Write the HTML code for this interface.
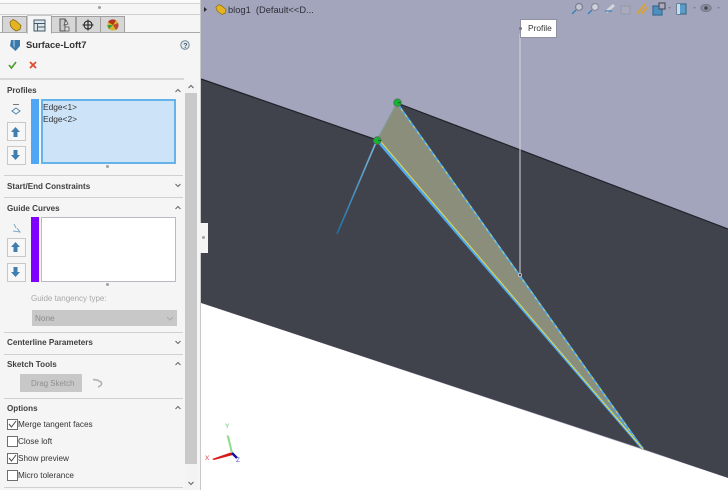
<!DOCTYPE html>
<html><head><meta charset="utf-8">
<style>
html,body{margin:0;padding:0;width:728px;height:490px;overflow:hidden;background:#fff;font-family:"Liberation Sans",sans-serif}
#w{position:absolute;left:0;top:0;width:728px;height:490px;overflow:hidden;filter:blur(.3px)}
.a{position:absolute}
#p{left:0;top:0;width:200px;height:490px;background:#f5f5f5;overflow:hidden}
.t{position:absolute;font-size:8.2px;color:#333;white-space:nowrap;line-height:11px}
.h{position:absolute;left:7px;font-size:8.1px;font-weight:bold;color:#404040;white-space:nowrap;line-height:11px}
.l{position:absolute;left:4px;width:179px;height:1px;background:#d0d0d0}
.btn{position:absolute;left:7px;width:17px;height:17px;border:1px solid #c8c8c8;background:#f7f7f7}
.cb{position:absolute;left:7px;width:9px;height:9px;border:1px solid #6e6e6e;background:#fff}
.tab{position:absolute;top:16px;height:16px;background:#d6d6d6;border:1px solid #a0a0a0;border-bottom:none;width:23px}
.dot{position:absolute;width:3px;height:3px;border-radius:50%;background:#a0a0a0}
svg{position:absolute;overflow:visible}
</style></head><body><div id="w">
<svg class="a" style="left:0;top:0" width="728" height="490" viewBox="0 0 728 490">
<defs><linearGradient id="g1" x1="377" y1="140" x2="337" y2="234" gradientUnits="userSpaceOnUse"><stop offset="0" stop-color="#7fb9dc"/><stop offset="1" stop-color="#1f6f9f"/></linearGradient></defs>
<rect x="200" y="0" width="528" height="490" fill="#a2a5bb"/>
<polygon points="201,79 377,140 397,103 728,229 728,478 643,449 201,303" fill="#40424c"/>
<polyline points="201,79 377,140" stroke="#20212a" stroke-width="1.2" fill="none"/>
<polyline points="397,103 728,229" stroke="#20212a" stroke-width="1.2" fill="none"/>
<polygon points="201,303 728,478 728,490 201,490" fill="#fff"/>
<polygon points="397,103 377,140 643,449" fill="#8c8e7c"/>
<line x1="397" y1="103" x2="377" y2="140" stroke="#7f9a94" stroke-width="1.2"/>
<line x1="377" y1="140" x2="337" y2="234" stroke="url(#g1)" stroke-width="1.6"/>
<line x1="397" y1="103" x2="643" y2="449" stroke="#4fa9ec" stroke-width="1.8"/>
<line x1="397" y1="103" x2="643" y2="449" stroke="#d3cc55" stroke-width="1" stroke-dasharray="3 4"/>
<line x1="377" y1="140" x2="643" y2="449" stroke="#4fa9ec" stroke-width="2.8"/>
<line x1="378.500" y1="139" x2="643" y2="449" stroke="#e0d44e" stroke-width="1.1"/>
<line x1="520" y1="34" x2="520" y2="275" stroke="#d8d8d8" stroke-width="1"/>
<circle cx="520" cy="275" r="1.6" fill="#40424c" stroke="#d0d0d0" stroke-width=".8"/>
<circle cx="397.500" cy="102.700" r="3.8" fill="#12b52f" stroke="#5b6a60" stroke-width=".8"/>
<circle cx="377.300" cy="140.500" r="3.8" fill="#12b52f" stroke="#5b6a60" stroke-width=".8"/>
<line x1="398" y1="102.700" x2="401" y2="102.700" stroke="#174d20" stroke-width=".8"/>
<line x1="378" y1="140.500" x2="381" y2="140.500" stroke="#174d20" stroke-width=".8"/>
<!-- triad -->
<polygon points="232,452 233,455 214,460 212,459" fill="#d51a1a"/>
<polygon points="231,453 233,453 229,436 226.500,435" fill="#8fdc8f"/>
<line x1="232" y1="453" x2="237" y2="458" stroke="#10109a" stroke-width="2.4"/>
<text x="205" y="460" font-size="6.500" fill="#e04040" font-family="Liberation Sans">X</text>
<text x="225" y="428" font-size="6.500" fill="#58c858" font-family="Liberation Sans">Y</text>
<text x="236" y="462" font-size="6.500" fill="#5050d8" font-family="Liberation Sans">Z</text>
<!-- top-left tree -->
<polygon points="204,7 204,12 207,9.500" fill="#2a2a2a"/>
<path d="M216 7 L219 4.500 L222 6 L226 9.500 L225.500 13 L222 14.500 L219 12.500 L216.500 10 Z" fill="#e3b324" stroke="#8a6a10" stroke-width=".7"/>
<!-- heads up toolbar -->
<g fill="none" stroke-width="1.300">
<circle cx="579" cy="7" r="3.500" stroke="#7d8095" fill="#c4c6d2"/><line x1="576" y1="10" x2="572" y2="14" stroke="#3b7fb6"/>
<circle cx="595" cy="7" r="3.500" stroke="#8a8da0" fill="#cfd0da"/><line x1="592" y1="10" x2="588" y2="14" stroke="#3b7fb6"/>
<line x1="606" y1="12" x2="614" y2="5" stroke="#d5d6dd" stroke-width="3"/><line x1="605" y1="11" x2="612" y2="11" stroke="#3b7fb6"/>
<rect x="621" y="6" width="9" height="8" stroke="#9a9cad" fill="#a9abbd"/>
<path d="M637 14 L645 4 M641 14 L648 7" stroke="#d7a23a" stroke-width="2"/>
<rect x="653" y="6" width="9" height="9" fill="#4d8fc0" stroke="#3d6f96"/><rect x="659" y="3" width="6" height="6" fill="#a9abbd" stroke="#55576a"/>
<rect x="677" y="4" width="9" height="10" fill="#5a9cc8" stroke="#4b6f8a"/><rect x="677" y="4" width="3" height="10" fill="#c9dbe6"/>
<ellipse cx="706" cy="8" rx="5" ry="3.500" fill="#8d8f9e" stroke="#7b7d8c"/><circle cx="706" cy="8" r="1.800" fill="#44465a"/>
</g>
<g fill="#7f8297"><polygon points="668,7 671,7 669.500,9"/><polygon points="693,7 696,7 694.500,9"/><polygon points="717,7 720,7 718.500,9"/></g>
</svg>
<div class="t" style="left:228px;top:5px;font-size:9.300px;color:#2e2e38">blog1&nbsp; (Default&lt;&lt;D...</div>
<div class="a" style="left:520px;top:19px;width:37px;height:19px;background:#fff;border:1px solid #8f90a0;box-sizing:border-box"></div>
<div class="t" style="left:528px;top:23px;font-size:8.400px;color:#333">Profile</div>
<div class="a" style="left:519px;top:27px;width:3px;height:3px;border-radius:50%;background:#777"></div>

<div class="a" id="p">
 <div class="a" style="left:0;top:0;width:200px;height:3px;background:#fafafa;border-bottom:1px solid #d4d4d4"></div>
 <div class="dot" style="left:98px;top:6px"></div>
 <div class="a" style="left:0;top:14px;width:200px;height:1px;background:#d0d0d0"></div>
 <div class="tab" style="left:2px"></div>
 <div class="tab" style="left:27px;top:15px;height:18px;background:#f5f5f5;border-color:#c8c8c8"></div>
 <div class="tab" style="left:51px"></div>
 <div class="tab" style="left:76px"></div>
 <div class="tab" style="left:100px"></div>
 <div class="a" style="left:0;top:32px;width:27px;height:1px;background:#aaa"></div>
 <div class="a" style="left:51px;top:32px;width:149px;height:1px;background:#aaa"></div>
 <svg style="left:0;top:0" width="200" height="490">
  <path d="M10 22 L13 19.500 L16 21 L21 25.500 L20 29.500 L16 31 L13 29 L10.500 26 Z" fill="#e3b324" stroke="#8a6a10" stroke-width=".8"/>
  <rect x="34" y="20" width="11" height="11" fill="#dfe6ec" stroke="#3f5666"/><path d="M34 23.500H45M37.500 23.500V31M37.500 27H45" stroke="#3f5666" stroke-width=".9"/>
  <path d="M60 19H65V31H60Z" fill="#c9c9c9" stroke="#555"/><path d="M66 20L68 24L64 25ZM65 27H69V31H65Z" fill="#e0e0e0" stroke="#555" stroke-width=".8"/>
  <circle cx="88" cy="25" r="4" fill="none" stroke="#222" stroke-width="1.100"/><path d="M88 19.500V30.500M82.500 25H93.500" stroke="#222" stroke-width="1.100"/>
  <circle cx="113" cy="25" r="5.500" fill="#d8b530"/><path d="M113 25L108 22A5.500 5.500 0 0 1 116 20.500Z" fill="#b6331f"/><path d="M113 25L118 23A5.500 5.500 0 0 1 116 30Z" fill="#c04a30"/><path d="M113 25L109 29A5.500 5.500 0 0 1 107.500 25Z" fill="#3a9c3a"/>
  <path d="M11 40H20V46L15.500 51L10 46Z" fill="#3b79a8"/><path d="M13 40H15V48L13 46Z" fill="#79a9cc"/>
  <circle cx="185" cy="45" r="4.200" fill="#e4ecf0" stroke="#6b8494" stroke-width="1"/><text x="183.200" y="47.800" font-size="7" font-weight="bold" fill="#456" font-family="Liberation Sans">?</text>
  <path d="M9 65L11.500 68L16 62" fill="none" stroke="#4ba02f" stroke-width="1.700"/>
  <path d="M30 62L36 68M36 62L30 68" stroke="#e2462d" stroke-width="1.700"/>
  <!-- chevrons -->
  <g fill="none" stroke="#6a6a6a" stroke-width="1.100">
   <path d="M175.500 92L178 89.500L180.500 92"/>
   <path d="M175.500 184L178 186.500L180.500 184"/>
   <path d="M175.500 209L178 206.500L180.500 209"/>
   <path d="M175.500 341L178 343.500L180.500 341"/>
   <path d="M175.500 365L178 362.500L180.500 365"/>
   <path d="M175.500 409L178 406.500L180.500 409"/>
  </g>
  <!-- profile icon -->
  <g fill="none" stroke="#4e88ad" stroke-width="1"><path d="M16 108L20 111L16 114L12 111Z"/></g>
  <path d="M13 104.500H19" stroke="#777" stroke-width="1"/>
  <path d="M16 228L14 224M13 231L20 232L17 228" fill="none" stroke="#7da9c5" stroke-width="1"/>
  <path d="M93 379.500L97 380L101 382Q103 385 98 387" fill="none" stroke="#b4b4b4" stroke-width="1.700"/>
 </svg>
 <div class="h" style="left:26px;top:39px;font-size:9.400px;color:#333">Surface-Loft7</div>
 <!-- Profiles -->
 <div class="a" style="left:0;top:78px;width:184px;height:2px;background:#d8d8d8"></div>
 <div class="h" style="left:7px;top:85px">Profiles</div>
 <div class="a" style="left:31px;top:99px;width:8px;height:65px;background:#4ea6f5"></div>
 <div class="a" style="left:41px;top:99px;width:135px;height:65px;box-sizing:border-box;background:#cde3f8;border:2px solid #66b2ea"></div>
 <div class="t" style="left:43px;top:102px;font-size:8.400px">Edge&lt;1&gt;</div>
 <div class="t" style="left:43px;top:114px;font-size:8.400px">Edge&lt;2&gt;</div>
 <div class="btn" style="top:122px"></div><div class="btn" style="top:146px"></div>
 <div class="dot" style="left:106px;top:165px"></div>
 <div class="l" style="top:175px"></div>
 <div class="h" style="top:181px">Start/End Constraints</div>
 <div class="l" style="top:197px"></div>
 <div class="h" style="top:203px">Guide Curves</div>
 <div class="a" style="left:31px;top:217px;width:8px;height:65px;background:#7f00ff"></div>
 <div class="a" style="left:41px;top:217px;width:135px;height:65px;box-sizing:border-box;background:#fff;border:1px solid #b9b9c9"></div>
 <div class="btn" style="top:238px"></div><div class="btn" style="top:263px"></div>
 <div class="dot" style="left:106px;top:283px"></div>
 <div class="t" style="left:31px;top:293px;color:#a8a8a8;font-size:8px">Guide tangency type:</div>
 <div class="a" style="left:32px;top:310px;width:145px;height:16px;background:#c8c8c8"></div>
 <div class="t" style="left:35px;top:313px;color:#8a8a8a">None</div>
 <svg style="left:0;top:0" width="200" height="490"><path d="M167 317L170 320L173 317" fill="none" stroke="#aaa"/></svg>
 <div class="l" style="top:332px"></div>
 <div class="h" style="top:337px">Centerline Parameters</div>
 <div class="l" style="top:354px"></div>
 <div class="h" style="top:359px">Sketch Tools</div>
 <div class="a" style="left:20px;top:374px;width:62px;height:18px;background:#c8c8c8"></div>
 <div class="t" style="left:31px;top:378px;color:#909090;font-size:7.900px">Drag Sketch</div>
 <div class="l" style="top:398px"></div>
 <div class="h" style="top:403px">Options</div>
 <div class="cb" style="top:419px"></div><div class="t" style="left:18px;top:419px">Merge tangent faces</div>
 <div class="cb" style="top:436px"></div><div class="t" style="left:18px;top:436px">Close loft</div>
 <div class="cb" style="top:453px"></div><div class="t" style="left:18px;top:453px">Show preview</div>
 <div class="cb" style="top:470px"></div><div class="t" style="left:18px;top:470px">Micro tolerance</div>
 <div class="l" style="top:487px"></div>
 <svg style="left:0;top:0" width="200" height="490">
  <path d="M9 424L11.500 427L16 421M9 458L11.500 461L16 455" fill="none" stroke="#444" stroke-width="1"/>
  <g fill="#3f7eae"><path d="M15.500 127L20 132H17.500V137H13.500V132H11Z"/><path d="M15.500 160L20 155H17.500V150H13.500V155H11Z"/>
  <path d="M15.500 242L20 247H17.500V252H13.500V247H11Z"/><path d="M15.500 277L20 272H17.500V267H13.500V272H11Z"/></g>
 </svg>
 <!-- scrollbar -->
 <div class="a" style="left:185px;top:82px;width:12px;height:408px;background:#f3f3f3"></div>
 <div class="a" style="left:185px;top:93px;width:12px;height:371px;background:#c9c9c9"></div>
 <svg style="left:0;top:0" width="200" height="490"><g fill="none" stroke="#666" stroke-width="1.100"><path d="M188.500 88L191 85.500L193.500 88"/><path d="M188.500 482L191 484.500L193.500 482"/></g></svg>
</div>
<div class="a" style="left:200px;top:0;width:1px;height:490px;background:#c9c9c9"></div>
<div class="a" style="left:200px;top:223px;width:8px;height:30px;background:#f4f4f4"></div>
<div class="dot" style="left:202px;top:236px"></div>
</div></body></html>
